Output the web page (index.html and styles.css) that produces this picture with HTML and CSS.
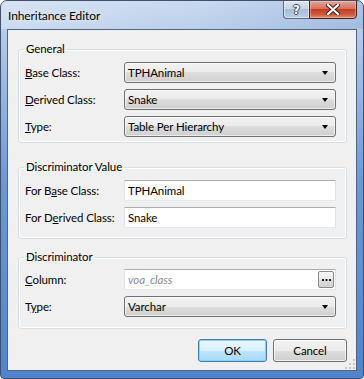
FILE: index.html
```html
<!DOCTYPE html>
<html>
<head>
<meta charset="utf-8">
<link rel="stylesheet" href="styles.css">
</head>
<body>
<div class="window">
  <div class="titlebar">
    <span class="title">Inheritance Editor</span>
    <div class="caption-buttons">
      <div class="cap help">?</div>
      <div class="cap close">
        <svg width="14" height="11" viewBox="0 0 14 11"><path d="M2 1 L12 10 M12 1 L2 10" stroke="#3a1a14" stroke-width="4" stroke-linecap="square"/><path d="M2 1 L12 10 M12 1 L2 10" stroke="#fff" stroke-width="2.2" stroke-linecap="square"/></svg>
      </div>
    </div>
  </div>
  <div class="client">
    <fieldset class="group general">
      <legend>General</legend>
      <div class="rows">
        <div class="row"><label><u>B</u>ase Class:</label><div class="combo"><span>TPHAnimal</span><span class="arrow"></span></div></div>
        <div class="row"><label><u>D</u>erived Class:</label><div class="combo"><span>Snake</span><span class="arrow"></span></div></div>
        <div class="row"><label><u>T</u>ype:</label><div class="combo"><span>Table Per Hierarchy</span><span class="arrow"></span></div></div>
      </div>
    </fieldset>
    <fieldset class="group value">
      <legend>Discriminator Value</legend>
      <div class="rows">
        <div class="row"><label>For B<u>a</u>se Class:</label><div class="textbox">TPHAnimal</div></div>
        <div class="row"><label>For D<u>e</u>rived Class:</label><div class="textbox">Snake</div></div>
      </div>
    </fieldset>
    <fieldset class="group disc">
      <legend>Discriminator</legend>
      <div class="rows">
        <div class="row"><label><u>C</u>olumn:</label><div class="textbox column"><span class="placeholder">voa_class</span><span class="ellipsis"><svg width="9" height="3" viewBox="0 0 9 3"><rect x="0" y="0" width="2" height="2" fill="#1a1a1a"/><rect x="3.5" y="0" width="2" height="2" fill="#1a1a1a"/><rect x="7" y="0" width="2" height="2" fill="#1a1a1a"/></svg></span></div></div>
        <div class="row"><label>T<u>y</u>pe:</label><div class="combo"><span>Varchar</span><span class="arrow"></span></div></div>
      </div>
    </fieldset>
    <div class="buttons">
      <div class="btn ok">OK</div>
      <div class="btn cancel">Cancel</div>
    </div>
    <svg class="grip" width="10" height="10" viewBox="0 0 10 10">
      <g fill="#c6c6c6">
        <rect x="8" y="0" width="2" height="2"/>
        <rect x="4" y="4" width="2" height="2"/><rect x="8" y="4" width="2" height="2"/>
        <rect x="0" y="8" width="2" height="2"/><rect x="4" y="8" width="2" height="2"/><rect x="8" y="8" width="2" height="2"/>
      </g>
    </svg>
  </div>
</div>
</body>
</html>
```
FILE: styles.css
```css
html, body {
  margin: 0;
  padding: 0;
  background: #ffffff;
}
body {
  font-family: Lato, "Liberation Sans", sans-serif;
  font-size: 11.5px;
  letter-spacing: -0.1px;
  color: #000;
}
.window {
  width: 364px;
  height: 379px;
  box-sizing: border-box;
  border: 1px solid #3f5068;
  border-radius: 7px 7px 4px 4px;
  background:
    linear-gradient(to bottom, #c6d8ef 0px, #b6cce9 28px, #97b6e2 90px, #6d98d7 180px, #5183cd 379px);
  display: flex;
  flex-direction: column;
  overflow: hidden;
}
.titlebar {
  height: 28px;
  display: flex;
  align-items: flex-start;
  padding-left: 7px;
  background: linear-gradient(to right, rgba(255,255,255,0.3), rgba(255,255,255,0.05) 55%, rgba(70,110,180,0.18));
}
.title {
  font-size: 12px;
  line-height: 16px;
  margin-top: 7px;
  color: #000;
  text-shadow: 0 0 6px rgba(255,255,255,0.9);
}
.caption-buttons {
  margin-left: auto;
  margin-right: 6px;
  margin-top: -1px;
  display: flex;
}
.cap {
  height: 19px;
  box-sizing: border-box;
  display: flex;
  align-items: center;
  justify-content: center;
}
.help {
  width: 26px;
  border: 1px solid #5a6b84;
  border-right: none;
  border-radius: 0 0 0 4px;
  background: linear-gradient(to bottom, #dfe7f0 0%, #c7d4e4 45%, #a9bdd5 50%, #b9cde4 100%);
  box-shadow: inset 0 0 0 1px rgba(255,255,255,0.5);
  color: #fff;
  font-family: "DejaVu Sans", sans-serif;
  font-weight: bold;
  font-size: 12px;
  line-height: 14px;
  letter-spacing: 0;
  text-shadow: 1px 0 0 #3b4a5f, -1px 0 0 #3b4a5f, 0 1px 0 #3b4a5f, 0 -1px 0 #3b4a5f;
}
.close {
  width: 48px;
  border: 1px solid #4a1d17;
  border-radius: 0 0 4px 0;
  background: linear-gradient(to bottom, #e6a79b 0%, #d4705c 45%, #c23e25 50%, #cf5a3e 80%, #e0906f 100%);
  box-shadow: inset 0 0 0 1px rgba(255,220,210,0.4);
}
.client {
  flex: 1;
  margin: 0 6px 7px 6px;
  border: 1px solid #4f6585;
  background: #f0f0f0;
  display: flex;
  flex-direction: column;
  padding: 11px 9px 0 10px;
  position: relative;
}
.group {
  margin: 0;
  border: 1px solid #d5dfe5;
  border-radius: 3px;
  box-shadow: inset 0 0 0 1px #ffffff;
  padding: 5px 10px 5px 6px;
  min-width: 0;
}
.group legend {
  padding: 0 2px;
  margin-left: -1px;
  line-height: 16px;
}
.value { margin-top: 16px; padding-bottom: 10px; }
.disc { margin-top: 10px; padding-top: 4px; padding-bottom: 11px; }
.rows {
  display: flex;
  flex-direction: column;
  gap: 6px;
}
.row {
  display: flex;
  align-items: center;
  height: 21px;
}
.row label {
  width: 99px;
  flex: none;
}
.combo {
  flex: 1;
  height: 21px;
  box-sizing: border-box;
  border: 1px solid #707070;
  border-radius: 3px;
  background: linear-gradient(to bottom, #f2f2f2 0%, #ebebeb 50%, #dddddd 50%, #cfcfcf 100%);
  box-shadow: inset 0 0 0 1px rgba(255,255,255,0.6);
  display: flex;
  align-items: center;
  padding-left: 3px;
}
.arrow {
  margin-left: auto;
  margin-right: 7px;
  width: 0;
  height: 0;
  border-left: 3.5px solid transparent;
  border-right: 3.5px solid transparent;
  border-top: 4px solid #000;
}
.textbox {
  flex: 1;
  height: 21px;
  box-sizing: border-box;
  border: 1px solid;
  border-color: #abadb3 #dbdfe6 #e3e9ef #e2e3ea;
  background: #ffffff;
  display: flex;
  align-items: center;
  padding-left: 3px;
}
.column {
  padding-right: 1px;
}
.placeholder {
  color: #8d8d8d;
  font-style: italic;
}
.ellipsis {
  margin-left: auto;
  width: 16px;
  height: 17px;
  box-sizing: border-box;
  border: 1px solid #8a8a8a;
  border-radius: 2px;
  background: linear-gradient(to bottom, #f6f6f6 0%, #ebebeb 50%, #dddddd 50%, #d2d2d2 100%);
  display: flex;
  justify-content: center;
  align-items: flex-end;
  padding-bottom: 5px;
}
.buttons {
  margin-top: 10px;
  display: flex;
  justify-content: flex-end;
  gap: 6px;
}
.btn {
  height: 23px;
  box-sizing: border-box;
  border-radius: 3px;
  display: flex;
  align-items: center;
  justify-content: center;
}
.ok {
  width: 69px;
  border: 1px solid #3c7fb1;
  background: linear-gradient(to bottom, #eaf6fd 0%, #d9f0fc 50%, #bee6fd 50%, #a7d9f5 100%);
  box-shadow: inset 0 0 0 1px #8ed2f0;
}
.cancel {
  width: 74px;
  border: 1px solid #707070;
  background: linear-gradient(to bottom, #f2f2f2 0%, #ebebeb 50%, #dddddd 50%, #cfcfcf 100%);
  box-shadow: inset 0 0 0 1px rgba(255,255,255,0.7);
}
.grip {
  position: absolute;
  right: 1px;
  bottom: 1px;
}
```
